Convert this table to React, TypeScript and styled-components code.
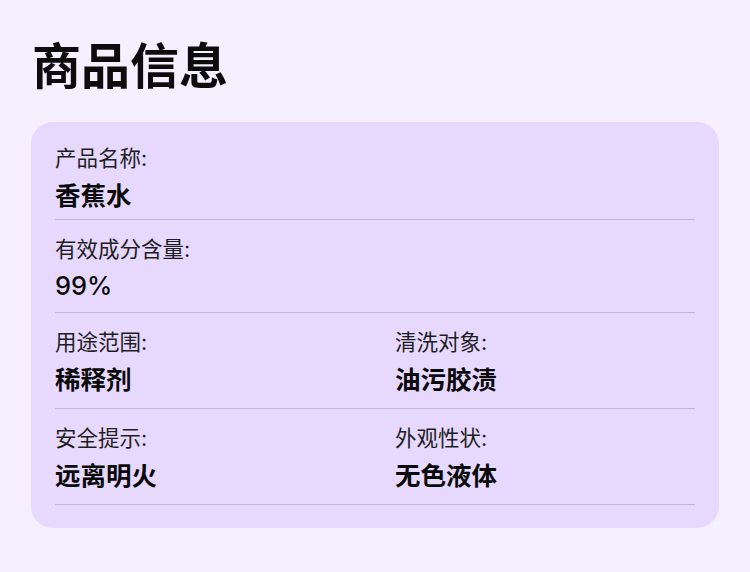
import React from "react";
import styled, { createGlobalStyle } from "styled-components";

const Global = createGlobalStyle`
  html, body {
    margin: 0;
    padding: 0;
    background: #f4f0ff;
  }
  body {
    font-family: Inter, "Noto Sans CJK SC", sans-serif;
    color: #111111;
  }
`;

const Page = styled.div`
  padding: 37px 31px 32px 31px;
  display: flex;
  flex-direction: column;
  gap: 26px;
`;

const Title = styled.h1`
  margin: 0 0 0 1px;
  font-size: 49px;
  line-height: 59px;
  font-weight: 700;
  color: #0c0c0c;
`;

const Card = styled.div`
  background: #e7d8fe;
  border-radius: 22px;
  padding: 21px 24px 23px 24px;
  display: flex;
  flex-direction: column;
`;

const Row = styled.div<{ $cols: number }>`
  display: grid;
  grid-template-columns: repeat(${(p) => p.$cols}, 1fr);
  column-gap: 40px;
  border-bottom: 1.5px solid #c2b4d9;
`;

const Cell = styled.div<{ $first?: boolean }>`
  display: flex;
  flex-direction: column;
  gap: 7px;
  padding: ${(p) => (p.$first ? "0 0 7px" : "14px 0 12px")};
`;

const Label = styled.div`
  font-size: 21.5px;
  line-height: 30px;
  font-weight: 400;
  color: #1e1e1e;
`;

const Value = styled.div<{ $latin?: boolean }>`
  font-size: 25.5px;
  line-height: ${(p) => (p.$latin ? "29px" : "32px")};
  font-weight: ${(p) => (p.$latin ? 500 : 700)};
  color: #0a0a0a;
`;

type Item = { label: string; value: string; latin?: boolean };

const rows: Item[][] = [
  [{ label: "产品名称:", value: "香蕉水" }],
  [{ label: "有效成分含量:", value: "99%", latin: true }],
  [
    { label: "用途范围:", value: "稀释剂" },
    { label: "清洗对象:", value: "油污胶渍" },
  ],
  [
    { label: "安全提示:", value: "远离明火" },
    { label: "外观性状:", value: "无色液体" },
  ],
];

export default function App() {
  return (
    <>
      <Global />
      <Page>
        <Title>商品信息</Title>
        <Card>
          {rows.map((row, i) => (
            <Row key={i} $cols={row.length === 1 ? 1 : 2}>
              {row.map((it) => (
                <Cell key={it.label} $first={i === 0}>
                  <Label>{it.label}</Label>
                  <Value $latin={it.latin}>{it.value}</Value>
                </Cell>
              ))}
            </Row>
          ))}
        </Card>
      </Page>
    </>
  );
}
